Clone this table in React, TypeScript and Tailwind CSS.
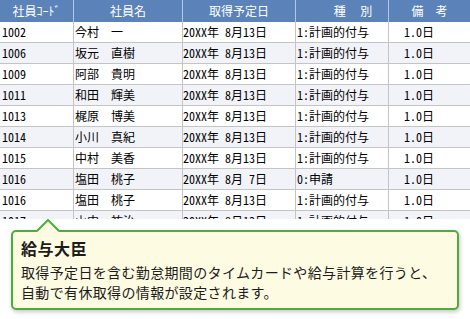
const rows = [
  ["1002", "今村　一", "20XX年 8月13日", "1:計画的付与", "1.0日"],
  ["1006", "坂元　直樹", "20XX年 8月13日", "1:計画的付与", "1.0日"],
  ["1009", "阿部　貴明", "20XX年 8月13日", "1:計画的付与", "1.0日"],
  ["1011", "和田　輝美", "20XX年 8月13日", "1:計画的付与", "1.0日"],
  ["1013", "梶原　博美", "20XX年 8月13日", "1:計画的付与", "1.0日"],
  ["1014", "小川　真紀", "20XX年 8月13日", "1:計画的付与", "1.0日"],
  ["1015", "中村　美香", "20XX年 8月13日", "1:計画的付与", "1.0日"],
  ["1016", "塩田　桃子", "20XX年 8月 7日", "0:申請", "1.0日"],
  ["1016", "塩田　桃子", "20XX年 8月13日", "1:計画的付与", "1.0日"],
  ["1017", "山中　祐治", "20XX年 8月13日", "1:計画的付与", "1.0日"],
]

const cols = "grid grid-cols-[74px_109px_113px_93px_81px]"
// half-width digits, like the old bitmap gothic in the original
const hw = "[font-feature-settings:'hwid']"

const Header = () => {
  const cell = "flex items-center justify-center border-r border-[#b4c8e2] text-white"
  return (
    <div className={`${cols} h-[22px] bg-[#5b83b9]`}>
      <div className={`${cell} ${hw}`}>社員ｺｰﾄﾞ</div>
      <div className={cell}>社員名</div>
      <div className={cell}>取得予定日</div>
      <div className={`${cell} pl-[22px]`}>種　 別</div>
      <div className="flex items-center justify-center text-white">備　考</div>
    </div>
  )
}

const Row = ({ data, shaded }: { data: string[]; shaded: boolean }) => {
  const cell = "flex items-center border-r border-[#c4c4c4] whitespace-pre"
  return (
    <div className={`${cols} h-[21px] border-b border-[#c4c4c4] text-black ${shaded ? "bg-[#f2f3f8]" : "bg-white"}`}>
      <div className={`${cell} ${hw} pl-[2px]`}>{data[0]}</div>
      <div className={`${cell} pl-[1px]`}>{data[1]}</div>
      <div className={`${cell} ${hw} pl-0`}>{data[2]}</div>
      <div className={`${cell} ${hw} pl-[1px]`}>{data[3]}</div>
      <div className={`flex items-center ${hw} pl-[15px]`}>{data[4]}</div>
    </div>
  )
}

const Callout = () => (
  <div className="relative mx-[11px] mt-[11px] h-[80px] rounded-[5px] border-2 border-[#4cad3c] bg-[#fdfbe2] px-[8px] pt-[4px] text-[#1c1c1c] shadow-[1px_2px_4px_rgba(0,0,0,0.22)]">
    <svg className="absolute -top-[13px] left-[24px]" width="22" height="13" viewBox="0 0 22 13">
      <polygon points="0,13 11,1.5 22,13" fill="#fdfbe2" />
      <polyline points="0,12 11,1 22,12" fill="none" stroke="#4cad3c" strokeWidth="2" />
    </svg>
    <div className="mb-[2px] text-[16px] leading-[24px] font-bold tracking-[0.5px]">給与大臣</div>
    <div className="text-[14px] leading-[20px] tracking-[0.35px]">
      取得予定日を含む勤怠期間のタイムカードや給与計算を行うと、
      <br />
      自動で有休取得の情報が設定されます。
    </div>
  </div>
)

export default function App() {
  return (
    <div className="h-[319px] w-[470px] overflow-hidden bg-white font-['Noto_Sans_CJK_JP',sans-serif]">
      <div className="h-[219px] overflow-hidden text-[12px] leading-none">
        <Header />
        {rows.map((r, i) => (
          <Row key={i} data={r} shaded={i % 2 === 1} />
        ))}
      </div>
      <Callout />
    </div>
  )
}
